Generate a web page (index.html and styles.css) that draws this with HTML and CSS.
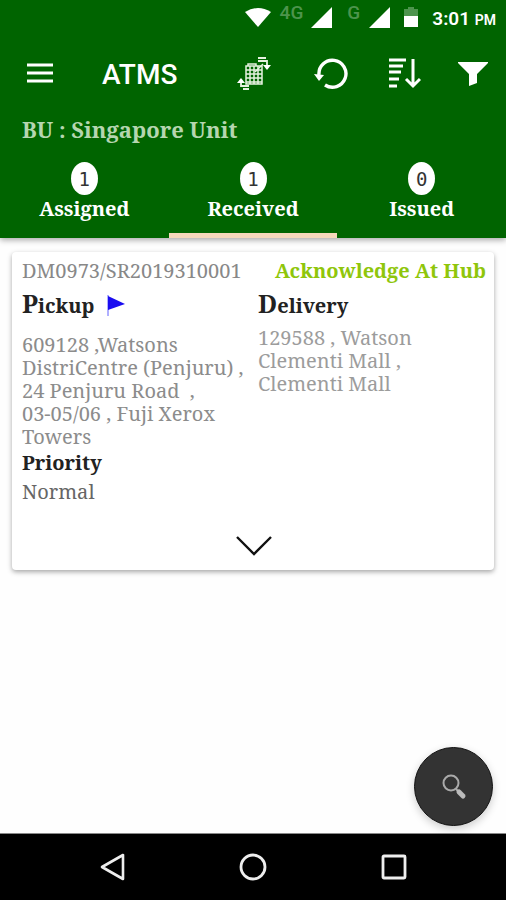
FILE: index.html
```html
<!DOCTYPE html>
<html lang="en">
<head>
    <meta charset="UTF-8">
    <meta name="viewport" content="width=device-width, initial-scale=1.0">
    <title>ATMS</title>
    <link rel="stylesheet" href="styles.css">
</head>
<body>
    <header class="header">
        <div class="status-bar">
            <svg class="wifi" width="26" height="22" viewBox="0 0 26 22"><path d="M0 5Q13-3 26 5L13 20Z" fill="#fff"/></svg>
            <span class="network">4G</span>
            <svg class="signal" width="22" height="22" viewBox="0 0 22 22"><path d="M21 0V21H0Z" fill="#fff"/></svg>
            <span class="network">G</span>
            <svg class="signal" width="22" height="22" viewBox="0 0 22 22"><path d="M22 0V21H1Z" fill="#fff"/></svg>
            <svg class="battery" width="14" height="22" viewBox="0 0 14 22"><path d="M0 2H4V0H10V2H14V10H0Z" fill="#4d944d"/><path d="M0 9H14V20H0Z" fill="#fff"/></svg>
            <span class="time">3:01 <small>PM</small></span>
        </div>

        <div class="toolbar">
            <button class="icon-btn" aria-label="Menu">
                <svg width="28" height="22" viewBox="0 0 28 22"><path d="M1 2H27M1 10H27M1 18H27" stroke="#fff" stroke-width="3"/></svg>
            </button>
            <h1>ATMS</h1>
            <div class="actions">
                <button class="icon-btn" aria-label="Hub">
                    <svg width="38" height="34" viewBox="0 0 38 34" fill="none" stroke="#e6f2e0">
                        <path d="M9 9H25V27H9ZM11 9V7H19V9M9 13H25M9 17H25M9 21H25M9 25H25M13 9V27M17 9V27M21 9V27" stroke-width="1.5"/>
                        <path d="M18 15L26 7" stroke-width="1.5"/>
                        <path d="M21 1H29M21 4H30V9" stroke-width="1.8"/>
                        <path d="M26 8H34L30 13Z" fill="#fff" stroke="none"/>
                        <path d="M4 26V29H12M6 32H12" stroke-width="1.8"/>
                        <path d="M0 26H8L4 21Z" fill="#fff" stroke="none"/>
                    </svg>
                </button>
                <button class="icon-btn" aria-label="Refresh">
                    <svg width="38" height="34" viewBox="0 0 38 34"><path d="M9 18A13.5 13.5 0 1 1 15 28" fill="none" stroke="#fff" stroke-width="3.4"/><path d="M4 17L14 18L9 24Z" fill="#fff"/></svg>
                </button>
                <button class="icon-btn" aria-label="Sort">
                    <svg width="38" height="34" viewBox="0 0 38 34" fill="none" stroke="#fff" stroke-width="3"><path d="M6 3H23M6 9H20M6 15H18M6 22H16M6 29H14"/><path d="M30 2V29M23 22L30 29L37 22"/></svg>
                </button>
                <button class="icon-btn" aria-label="Filter">
                    <svg width="34" height="34" viewBox="0 0 34 34"><path d="M2 5H32V6L21 17V26L13 29V17L2 6Z" fill="#fff"/></svg>
                </button>
            </div>
        </div>

        <p class="unit">BU : Singapore Unit</p>

        <nav class="tabs">
            <button class="tab"><span class="count">1</span>Assigned</button>
            <button class="tab active"><span class="count">1</span>Received</button>
            <button class="tab"><span class="count">0</span>Issued</button>
        </nav>
    </header>

    <main class="content">
        <article class="card">
            <div class="card-top">
                <span>DM0973/SR2019310001</span>
                <strong>Acknowledge At Hub</strong>
            </div>
            <div class="stops">
                <section class="pickup">
                    <div class="stop-title">
                        <h2>Pickup</h2>
                        <svg width="18" height="24" viewBox="0 0 18 24"><path d="M1 3V24" stroke="#6060ff"/><path d="M1 4L18 12L1 18Z" fill="#1a0cf0"/></svg>
                    </div>
                    <p>609128 ,Watsons<br>DistriCentre (Penjuru) ,<br>24 Penjuru Road&nbsp; ,<br>03-05/06 , Fuji Xerox<br>Towers</p>
                </section>
                <section class="delivery">
                    <div class="stop-title">
                        <h2>Delivery</h2>
                    </div>
                    <p>129588 , Watson<br>Clementi Mall ,<br>Clementi Mall</p>
                </section>
            </div>
            <h3>Priority</h3>
            <p class="priority">Normal</p>
            <button class="expand" aria-label="Show more">
                <svg width="38" height="24" viewBox="0 0 38 24"><path d="M2 3L19 20L36 3" fill="none" stroke="#111" stroke-width="2.4"/></svg>
            </button>
        </article>
    </main>

    <button class="search" aria-label="Search">
        <svg width="26" height="26" viewBox="0 0 26 26" fill="none"><circle cx="10" cy="9" r="7.5" stroke="#aaa" stroke-width="2"/><path d="M15 15L18 18" stroke="#aaa" stroke-width="2"/><path d="M18 18L22 22" stroke="#bbb" stroke-width="5" stroke-linecap="round"/></svg>
    </button>

    <footer class="nav-bar">
        <button class="icon-btn" aria-label="Back">
            <svg width="28" height="28" viewBox="0 0 28 28"><path d="M25 2V26L4 14Z" fill="none" stroke="#eee" stroke-width="2.6" stroke-linejoin="round"/></svg>
        </button>
        <button class="icon-btn" aria-label="Home">
            <svg width="28" height="28" viewBox="0 0 28 28"><circle cx="14" cy="14" r="12" fill="none" stroke="#eee" stroke-width="2.8"/></svg>
        </button>
        <button class="icon-btn" aria-label="Recent apps">
            <svg width="28" height="28" viewBox="0 0 28 28"><rect x="3" y="3" width="22" height="22" rx="1" fill="none" stroke="#eee" stroke-width="2.8"/></svg>
        </button>
    </footer>
</body>
</html>
```
FILE: styles.css
```css
* {
    box-sizing: border-box;
}

body {
    display: flex;
    flex-direction: column;
    min-height: 100vh;
    margin: 0;
    font-family: 'Noto Serif', 'DejaVu Serif', serif;
    font-size: 20px;
    line-height: 23px;
    background: #fefefe;
    color: #222;
}

h1, h2, h3, p {
    margin: 0;
}

button {
    padding: 0;
    border: 0;
    background: none;
    font: inherit;
    color: inherit;
    cursor: pointer;
}

svg {
    display: block;
}

.header {
    background: #006400;
    color: #fff;
    box-shadow: 0 2px 6px rgba(0, 0, 0, 0.35);
}

.status-bar {
    display: flex;
    justify-content: flex-end;
    height: 36px;
    padding: 7px 10px 0 0;
    font-family: Roboto, sans-serif;
}

.wifi {
    margin-right: 9px;
}

.network {
    margin-top: -6px;
    font-size: 19px;
    font-weight: 500;
    color: #4d944d;
}

.signal {
    margin: 0 14px 0 8px;
}

.time {
    margin-left: 14px;
    font-size: 19px;
    font-weight: 600;
}

.time small {
    font-size: 14px;
}

.toolbar {
    display: flex;
    align-items: center;
    height: 76px;
    padding: 0 16px 0 26px;
}

.toolbar h1 {
    margin-left: 48px;
    font-family: Roboto, sans-serif;
    font-size: 28px;
    font-weight: 500;
}

.actions {
    display: flex;
    gap: 35px;
    margin-left: auto;
}

.unit {
    padding: 6px 22px 8px;
    font-size: 22px;
    font-weight: bold;
    color: #b5d6b0;
}

.tabs {
    display: flex;
}

.tab {
    display: flex;
    flex: 1;
    flex-direction: column;
    align-items: center;
    height: 89px;
    padding-top: 13px;
    border-bottom: 5px solid transparent;
    font-weight: bold;
}

.tab.active {
    border-color: #f5d8bb;
}

.count {
    width: 27px;
    height: 33px;
    margin-bottom: 2px;
    border-radius: 50%;
    background: #fff;
    color: #333;
    font-family: 'DejaVu Sans Mono', monospace;
    font-size: 19px;
    font-weight: normal;
    line-height: 35px;
}

.content {
    flex: 1;
    padding: 14px 12px;
}

.card {
    padding: 7px 8px 12px 10px;
    border-radius: 4px;
    background: #fff;
    box-shadow: 0 2px 5px rgba(0, 0, 0, 0.35);
}

.card-top {
    display: flex;
    justify-content: space-between;
    white-space: nowrap;
    color: #888;
}

.card-top strong {
    color: #8fc60b;
}

.stops {
    display: grid;
    grid-template-columns: 1fr 1fr;
    gap: 8px;
    margin-top: 4px;
    color: #8c8c8c;
    white-space: nowrap;
}

.stop-title {
    display: flex;
    align-items: center;
    gap: 12px;
    height: 36px;
    color: #222;
}

.stop-title h2 {
    font-size: 20px;
}

.stop-title h2::first-letter {
    font-size: 25px;
}

.pickup p {
    padding-top: 11px;
}

.delivery p {
    padding-top: 4px;
    color: #9c9c9c;
}

.card h3 {
    margin-top: 3px;
    font-size: 20px;
}

.priority {
    margin-top: 6px;
    color: #666;
}

.expand {
    display: block;
    margin: 31px auto 0;
}

.search {
    position: fixed;
    right: 13px;
    bottom: 74px;
    display: flex;
    align-items: center;
    justify-content: center;
    width: 79px;
    height: 79px;
    border: 1px solid #111;
    border-radius: 50%;
    background: #333;
    box-shadow: 0 3px 8px rgba(0, 0, 0, 0.2);
}

.nav-bar {
    display: flex;
    align-items: center;
    justify-content: space-between;
    height: 67px;
    padding: 0 98px;
    border-top: 1px solid #888;
    background: #000;
}
```
